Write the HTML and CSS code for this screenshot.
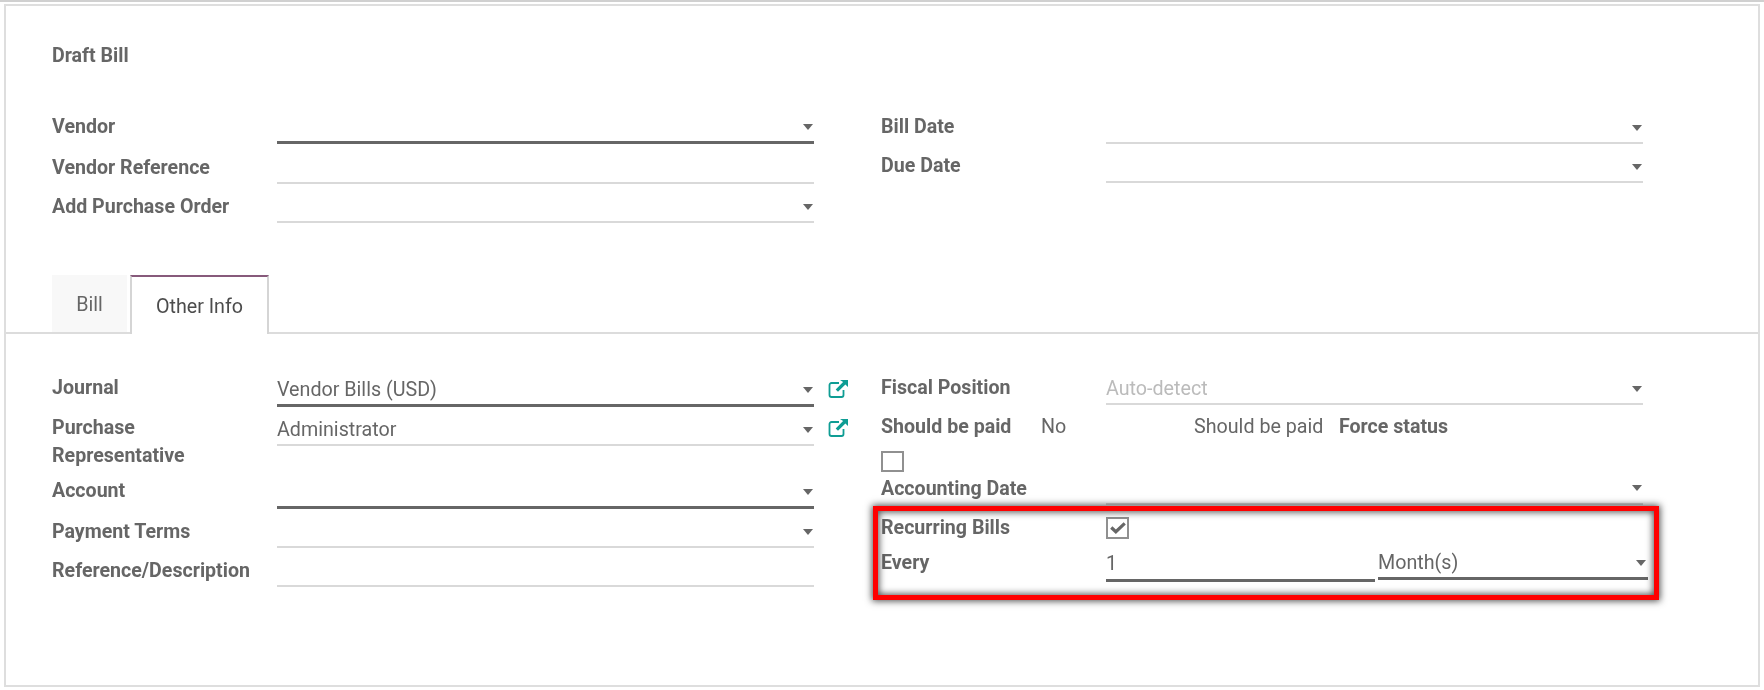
FILE: index.html
```html
<!DOCTYPE html>
<html lang="en">
<head>
<meta charset="utf-8">
<title>Draft Bill</title>
<link rel="stylesheet" href="styles.css">
</head>
<body>
<main class="sheet">
  <h1 class="title">Draft Bill</h1>
  <section class="columns top-columns">
    <div class="group">
      <div class="row row-lead row-spaced"><span class="label">Vendor</span><div class="input thick"><i class="caret"></i></div></div>
      <div class="row row-low"><span class="label">Vendor Reference</span><div class="input"></div></div>
      <div class="row row-low"><span class="label">Add Purchase Order</span><div class="input"><i class="caret"></i></div></div>
    </div>
    <div class="group">
      <div class="row row-lead"><span class="label">Bill Date</span><div class="input"><i class="caret"></i></div></div>
      <div class="row row-lead"><span class="label">Due Date</span><div class="input"><i class="caret"></i></div></div>
    </div>
  </section>
  <nav class="tabs">
    <span class="tab">Bill</span>
    <span class="tab active">Other Info</span>
  </nav>
  <section class="columns bottom-columns">
    <div class="group group-left">
      <div class="row row-first"><span class="label">Journal</span><div class="input thick"><span>Vendor Bills (USD)</span><i class="caret"></i></div>
        <svg class="ext" viewBox="0 0 20 18"><path d="M11 3H3.5A2 2 0 0 0 1.500 5v10a2 2 0 0 0 2 2h10a2 2 0 0 0 2-2v-5" fill="none" stroke="currentColor" stroke-width="1.800"/><path d="M12 0h8v7l-2.600-2.600-7.400 7.400-2.300-2.300 7.400-7.400z" fill="currentColor"/></svg></div>
      <div class="row"><span class="label">Purchase<br>Representative</span><div class="input"><span>Administrator</span><i class="caret"></i></div>
        <svg class="ext" viewBox="0 0 20 18"><path d="M11 3H3.500A2 2 0 0 0 1.500 5v10a2 2 0 0 0 2 2h10a2 2 0 0 0 2-2v-5" fill="none" stroke="currentColor" stroke-width="1.800"/><path d="M12 0h8v7l-2.600-2.600-7.400 7.400-2.300-2.300 7.400-7.400z" fill="currentColor"/></svg></div>
      <div class="row"><span class="label">Account</span><div class="input thick"><i class="caret"></i></div></div>
      <div class="row row-low"><span class="label">Payment Terms</span><div class="input"><i class="caret"></i></div></div>
      <div class="row row-low"><span class="label">Reference/Description</span><div class="input"></div></div>
    </div>
    <div class="group">
      <div class="row row-lead"><span class="label">Fiscal Position</span><div class="input placeholder"><span>Auto-detect</span><i class="caret"></i></div></div>
      <div class="paid-row">
        <span class="label">Should be paid</span>
        <span class="value">No</span>
        <span class="value">Should be paid</span>
        <span class="label">Force status</span>
      </div>
      <div class="check-line"><span class="checkbox"></span></div>
      <div class="row row-date"><span class="label">Accounting Date</span><div class="input"><i class="caret"></i></div></div>
      <div class="row row-check"><span class="label">Recurring Bills</span>
        <span class="checkbox checked"><svg class="tick" viewBox="0 0 15 11"><path d="M1.200 5 5.500 9 13.800 1.200" fill="none" stroke="currentColor" stroke-width="3"/></svg></span></div>
      <div class="row row-every"><span class="label">Every</span>
        <div class="pair">
          <div class="input thick"><span>1</span></div>
          <div class="input thick unit"><span>Month(s)</span><i class="caret"></i></div>
        </div>
      </div>
    </div>
  </section>
  <div class="highlight"></div>
</main>
</body>
</html>
```

FILE: styles.css
```css
* { box-sizing: border-box; }
html, body { margin: 0; padding: 0; background: #fff; }
body { font-family: Roboto, "Liberation Sans", sans-serif; font-size: 19.7px; color: #666; width: 1764px; height: 690px; overflow: hidden; border-top: 2px solid #d0d0d0; }
.sheet { position: relative; margin: 2px 4px 0 4px; height: 683px; border: 2px solid #dedede; filter: blur(.35px); }
.title { margin: 0; padding: 36px 0 0 46px; font-size: 19.6px; font-weight: 700; line-height: 28px; height: 99px; }
.columns { display: grid; grid-template-columns: 829px 1fr; padding-left: 46px; }
.row { display: grid; grid-template-columns: 225px 537px 1fr; min-height: 39px; align-items: start; }
.label { display: block; font-size: 19.6px; font-weight: 700; line-height: 28px; padding-top: 7px; white-space: nowrap; }
.row-lead .label { padding-top: 8px; }
.row-spaced { margin-bottom: 1px; }
.row-first .label { padding-top: 6px; }
.row-low .label { padding-top: 9px; }
.input { display: flex; align-items: center; height: 39px; padding-top: 8px; border-bottom: 2px solid #d9d9d9; line-height: 28px; }
.input.thick { border-bottom: 3px solid #666; }
.placeholder { color: #bbb; }
.caret { display: block; margin: 0 1px 0 auto; width: 0; height: 0; border-left: 5.500px solid transparent; border-right: 5.500px solid transparent; border-top: 6px solid #666; }
.ext { width: 20px; height: 18px; color: #0f9d94; margin: 12px 0 0 14px; }
.top-columns { height: 170px; }
.tabs { display: flex; margin: 0; height: 59px; padding-left: 46px; border-bottom: 2px solid #dcdcdc; }
.tab { width: 75px; height: 57px; margin-right: 3px; background: #f8f8f8; text-align: center; line-height: 60px; }
.tab.active { width: 139px; height: 59px; margin-right: 0; background: #fff; color: #4c4c4c; border: 2px solid #d5d5d5; border-top: 2px solid #875a7b; border-bottom: 0; line-height: 60px; }
.bottom-columns { padding-top: 32px; }
.group-left { padding-top: 2px; }
.paid-row { display: grid; grid-template-columns: 160px 153px 145px auto; height: 46px; }
.value { line-height: 28px; padding-top: 8px; }
.paid-row .label { padding-top: 8px; }
.check-line { height: 21px; }
.checkbox { display: block; width: 23px; height: 21px; border: 2px solid #909090; }
.checkbox.checked { display: flex; align-items: center; justify-content: center; height: 22px; }
.row-date { min-height: 33px; }
.row-date .label { padding-top: 3px; }
.row-date .input { height: 33px; padding-top: 0; }
.row-check { min-height: 44px; }
.row-check .label { padding-top: 9px; }
.row-check .checkbox { margin-top: 12px; }
.tick { width: 16px; height: 12px; color: #666; }
.row-every { min-height: 33px; }
.row-every .label { padding-top: 0; }
.pair { display: flex; gap: 3px; width: 543px; }
.pair .input { height: 33px; padding-top: 0; flex: 0 0 269px; }
.pair .input.unit { height: 31px; flex-basis: 270px; }
.unit .caret { margin-right: 2px; }
.highlight { position: absolute; left: 867px; top: 500px; width: 786px; height: 94px; border: 5px solid #f00; box-shadow: 0 0 7px 1px rgba(0,0,0,.7), inset 0 0 7px 1px rgba(0,0,0,.7); pointer-events: none; }
```
